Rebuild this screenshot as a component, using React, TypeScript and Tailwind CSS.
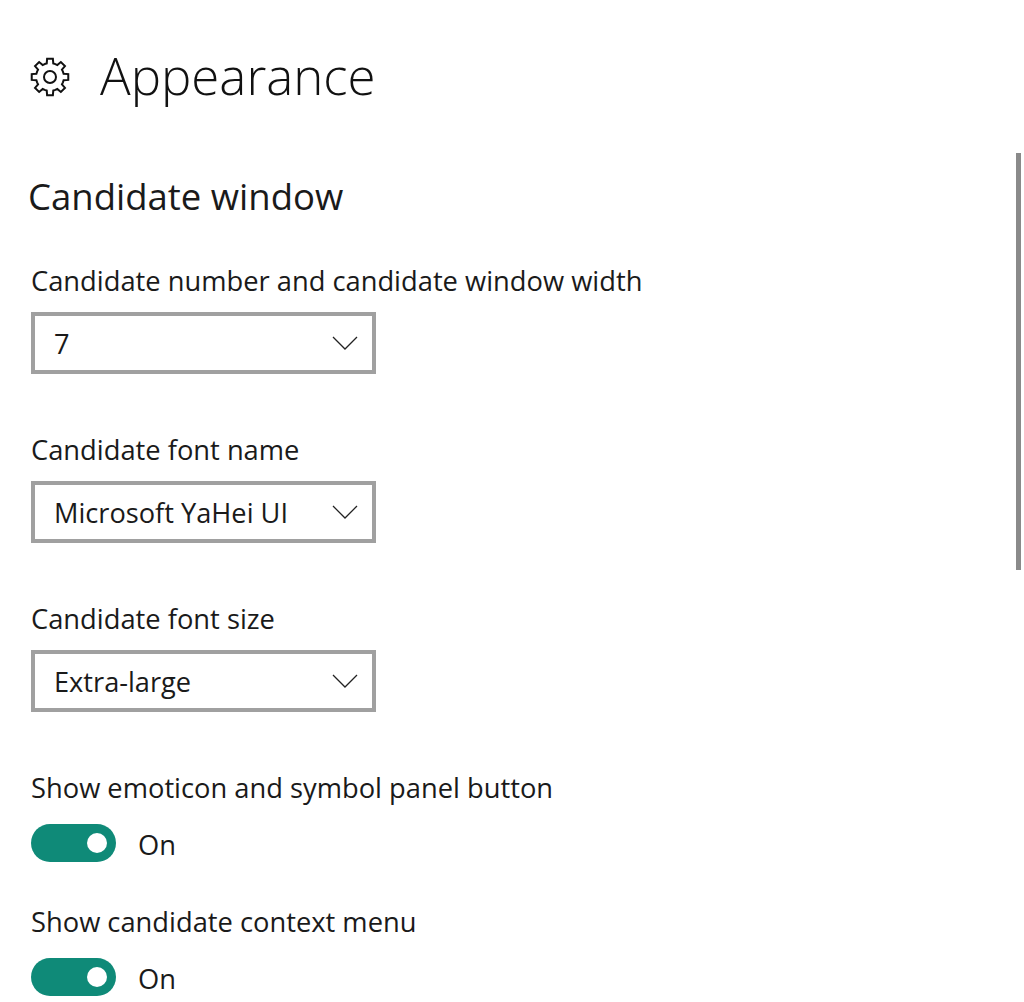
const FONT = { fontFamily: '"Open Sans", "Noto Sans", sans-serif' }

// eight tooth gear, outline only
function gearPath(cx: number, cy: number, outer: number, inner: number) {
  const pts: string[] = []
  const teeth = 8
  for (let i = 0; i < teeth; i++) {
    const a = (i * Math.PI * 2) / teeth - Math.PI / 2
    const step = (Math.PI * 2) / teeth
    const offs: Array<[number, number]> = [
      [-0.5, inner],
      [-0.3, inner],
      [-0.2, outer],
      [0.2, outer],
      [0.3, inner],
    ]
    for (const [o, r] of offs) {
      const t = a + o * step
      pts.push(`${(cx + Math.cos(t) * r).toFixed(2)} ${(cy + Math.sin(t) * r).toFixed(2)}`)
    }
  }
  return `M${pts.join('L')}Z`
}

function GearIcon() {
  return (
    <svg width="40" height="40" viewBox="0 0 40 40" fill="none" stroke="#111" strokeWidth="2" strokeLinejoin="miter">
      <path d={gearPath(20, 20, 18.5, 14)} />
      <circle cx="20" cy="20" r="6" />
    </svg>
  )
}

function Chevron() {
  return (
    <svg width="26" height="14" viewBox="0 0 26 14" fill="none" stroke="#222" strokeWidth="1.3">
      <path d="M1 1 L13 13 L25 1" />
    </svg>
  )
}

function Dropdown({ label, value }: { label: string; value: string }) {
  return (
    <div className="mb-[57px]">
      <div className="h-[38px] text-[27.3px] leading-[38px] text-[#1a1a1a]">{label}</div>
      <div className="mt-3 flex h-[62px] w-[345px] items-center justify-between border-4 border-[#a0a0a0] pr-[14px] pl-[19px] text-[27.2px] text-[#1a1a1a]">
        <span className="pt-[2px]">{value}</span>
        <Chevron />
      </div>
    </div>
  )
}

function Toggle({ label }: { label: string }) {
  return (
    <div className="mb-[41px]">
      <div className="h-[38px] text-[27.3px] leading-[38px] text-[#1a1a1a]">{label}</div>
      <div className="mt-[17px] flex items-center gap-[22px]">
        <div className="flex h-[38px] w-[85px] items-center justify-end rounded-full bg-[#0f8a78] pr-[9px]">
          <div className="size-[20px] rounded-full bg-white" />
        </div>
        <span className="pt-[3px] text-[27.3px] leading-[35px] text-[#1a1a1a]">On</span>
      </div>
    </div>
  )
}

export default function App() {
  return (
    <div className="relative h-[1002px] w-[1024px] overflow-hidden bg-white pl-[30px]" style={FONT}>
      <header className="flex h-[155px] items-start pt-[44px]">
        <div className="pt-[13px]">
          <GearIcon />
        </div>
        <h1 className="ml-[30px] text-[51px] leading-[62px] font-light text-[#111]">Appearance</h1>
      </header>
      <h2 className="-ml-[2px] h-[107px] pt-[16px] text-[36.5px] leading-[50px] text-[#1a1a1a]">Candidate window</h2>
      <div className="ml-[1px]">
        <Dropdown label="Candidate number and candidate window width" value="7" />
        <Dropdown label="Candidate font name" value="Microsoft YaHei UI" />
        <Dropdown label="Candidate font size" value="Extra-large" />
        <Toggle label="Show emoticon and symbol panel button" />
        <Toggle label="Show candidate context menu" />
      </div>
      <div className="absolute top-[153px] left-[1016px] h-[417px] w-[5px] bg-[#8a8a8a]" />
    </div>
  )
}
